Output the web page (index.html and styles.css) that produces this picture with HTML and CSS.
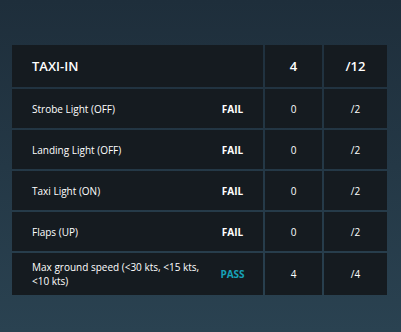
FILE: index.html
```html
<!DOCTYPE html>
<html lang="en">
<head>
<meta charset="utf-8">
<title>Taxi-in</title>
<link rel="stylesheet" href="styles.css">
</head>
<body>
<div class="score-table">
  <div class="row header">
    <div class="cell name-cell"><span class="name">TAXI-IN</span></div>
    <div class="cell num">4</div>
    <div class="cell num">/12</div>
  </div>
  <div class="row">
    <div class="cell name-cell"><span class="name">Strobe Light (OFF)</span><span class="status fail">FAIL</span></div>
    <div class="cell num">0</div>
    <div class="cell num">/2</div>
  </div>
  <div class="row">
    <div class="cell name-cell"><span class="name">Landing Light (OFF)</span><span class="status fail">FAIL</span></div>
    <div class="cell num">0</div>
    <div class="cell num">/2</div>
  </div>
  <div class="row">
    <div class="cell name-cell"><span class="name">Taxi Light (ON)</span><span class="status fail">FAIL</span></div>
    <div class="cell num">0</div>
    <div class="cell num">/2</div>
  </div>
  <div class="row">
    <div class="cell name-cell"><span class="name">Flaps (UP)</span><span class="status fail">FAIL</span></div>
    <div class="cell num">0</div>
    <div class="cell num">/2</div>
  </div>
  <div class="row tall">
    <div class="cell name-cell"><span class="name">Max ground speed (&lt;30 kts, &lt;15 kts, &lt;10 kts)</span><span class="status pass">PASS</span></div>
    <div class="cell num">4</div>
    <div class="cell num">/4</div>
  </div>
</div>
</body>
</html>
```
FILE: styles.css
```css
html, body {
  margin: 0;
  height: 100%;
}
body {
  background: linear-gradient(to bottom, #1e2e3b 0%, #2a4251 100%);
  font-family: "Open Sans", "Liberation Sans", sans-serif;
  color: #ffffff;
  padding: 45px 14px 0 12px;
  box-sizing: border-box;
}
.score-table {
  display: flex;
  flex-direction: column;
  gap: 2px;
  width: 375px;
}
.row {
  display: grid;
  grid-template-columns: 251px 57px 63px;
  gap: 2px;
  min-height: 39px;
}
.row.header {
  min-height: 42px;
}
.row.tall {
  min-height: 42px;
}
.cell {
  background: #151b20;
  display: flex;
  align-items: center;
  font-size: 10px;
  line-height: 14px;
}
.num {
  justify-content: center;
}
.header .cell {
  font-size: 13px;
  font-weight: 600;
}
.name-cell {
  padding-left: 20px;
}
.name {
  flex: 1;
  padding: 7px 0;
}
.status {
  width: 61px;
  text-align: center;
  font-weight: 700;
}
.pass {
  color: #17a2b8;
}
```
